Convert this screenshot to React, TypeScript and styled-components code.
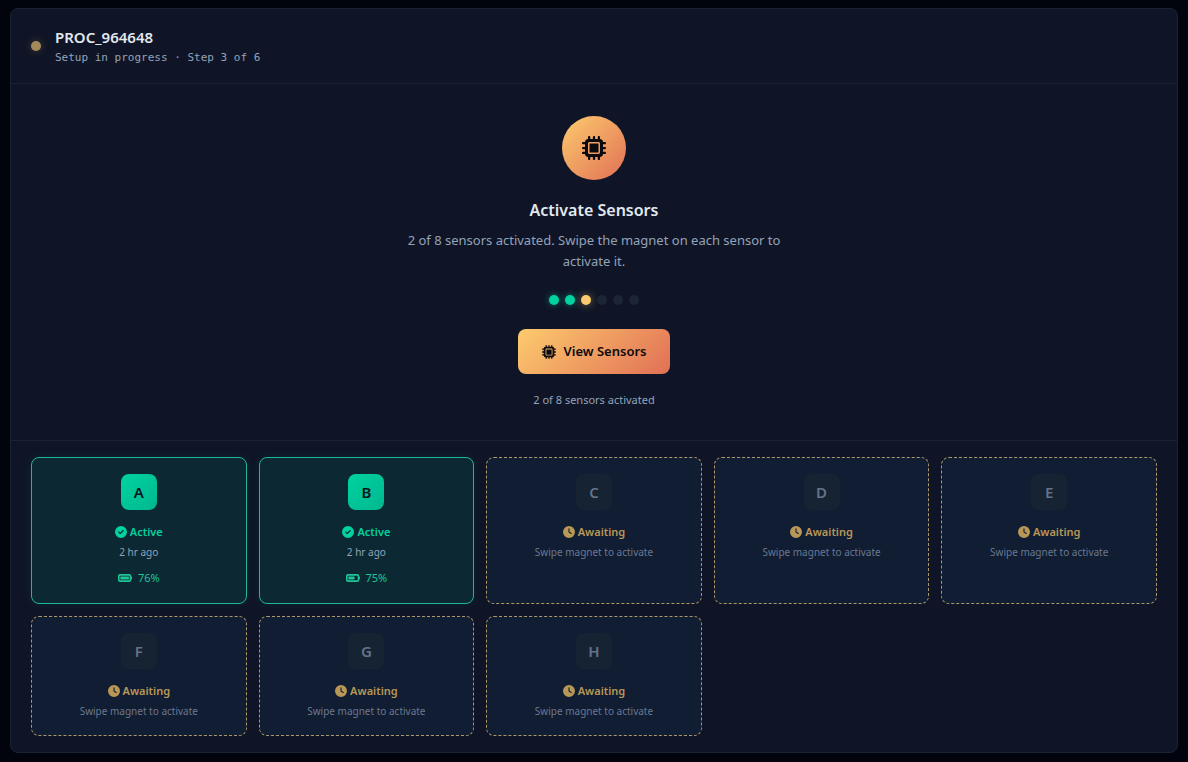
import React from 'react';
import styled, { createGlobalStyle, css } from 'styled-components';
import {
  FaMicrochip,
  FaCircleCheck,
  FaClock,
  FaBatteryFull,
  FaBatteryThreeQuarters,
} from 'react-icons/fa6';

const GlobalStyle = createGlobalStyle`
  *, *::before, *::after { box-sizing: border-box; }
  body {
    margin: 0;
    background: #01040d;
    color: #e2e8f0;
    font-family: 'Noto Sans', 'Open Sans', sans-serif;
  }
  h1, h2, p, ul, ol { margin: 0; padding: 0; }
  ul, ol { list-style: none; }
`;

const Page = styled.main`
  padding: 8px 10px;
`;

const Panel = styled.section`
  background: #0f1526;
  border: 1px solid #1a2332;
  border-radius: 8px;
`;

const Header = styled.header`
  display: flex;
  align-items: center;
  gap: 14px;
  padding: 16px 20px;
  border-bottom: 1px solid #1a2332;
`;

const StatusDot = styled.span`
  width: 10px;
  height: 10px;
  border-radius: 50%;
  background: #a48a58;
  box-shadow: 0 0 8px rgba(253, 203, 110, 0.25);
`;

const Name = styled.h1`
  font-size: 15px;
  line-height: 24px;
  font-weight: 600;
`;

const Progress = styled.p`
  font-family: 'DejaVu Sans Mono', 'Liberation Mono', monospace;
  font-size: 11px;
  line-height: 18px;
  color: #94a3b8;
`;

const Hero = styled.section`
  display: flex;
  flex-direction: column;
  align-items: center;
  padding: 32px 20px 30px;
  text-align: center;
  border-bottom: 1px solid #1a2332;
`;

const HeroIcon = styled.div`
  display: grid;
  place-items: center;
  width: 64px;
  height: 64px;
  margin-bottom: 16px;
  border-radius: 50%;
  background: linear-gradient(135deg, #fdcb6e, #e17055);
  color: #0a0a0f;
  font-size: 24px;
`;

const Title = styled.h2`
  margin-bottom: 6px;
  font-size: 16px;
  line-height: 28px;
  font-weight: 600;
`;

const Description = styled.p`
  max-width: 400px;
  margin-bottom: 23px;
  font-size: 13px;
  line-height: 21px;
  color: #94a3b8;
`;

const Steps = styled.ol`
  display: flex;
  gap: 6px;
  margin-bottom: 24px;
`;

type StepState = 'done' | 'current' | 'todo';

const stepStyles = {
  done: css`
    background: #00d2a0;
    box-shadow: 0 0 6px rgba(0, 210, 160, 0.5);
  `,
  current: css`
    background: #fdcb6e;
    box-shadow: 0 0 8px rgba(253, 203, 110, 0.5);
  `,
  todo: css`
    background: #1c2536;
  `,
};

const Step = styled.li<{ $state: StepState }>`
  width: 10px;
  height: 10px;
  border-radius: 50%;
  ${({ $state }) => stepStyles[$state]}
`;

const ViewButton = styled.button`
  display: inline-flex;
  align-items: center;
  gap: 8px;
  padding: 12px 24px;
  border: 0;
  border-radius: 8px;
  background: linear-gradient(135deg, #fdcb6e, #e17055);
  color: #0a0a0f;
  font: 600 13px/21px 'Noto Sans', 'Open Sans', sans-serif;
  cursor: pointer;

  svg { font-size: 14px; }
`;

const Note = styled.p`
  margin-top: 16px;
  font-size: 11px;
  line-height: 20px;
  color: #94a3b8;
`;

const Grid = styled.ul`
  display: grid;
  grid-template-columns: repeat(auto-fill, minmax(200px, 1fr));
  gap: 12px;
  padding: 16px 20px;
`;

const Card = styled.li<{ $active: boolean }>`
  display: flex;
  flex-direction: column;
  align-items: center;
  padding: 16px;
  border-radius: 8px;
  ${({ $active }) =>
    $active
      ? css`
          background: #0c2833;
          border: 1px solid #20b796;
          box-shadow: 0 0 12px rgba(0, 210, 160, 0.08);
        `
      : css`
          background: #111d32;
          border: 1px dashed #ad9766;
        `}
`;

const Badge = styled.span<{ $active: boolean }>`
  display: grid;
  place-items: center;
  width: 36px;
  height: 36px;
  margin-bottom: 12px;
  border-radius: 8px;
  font-size: 15px;
  line-height: 20px;
  font-weight: 600;
  ${({ $active }) =>
    $active
      ? css`
          background: linear-gradient(135deg, #00d2a0, #00b890);
          color: #06141a;
        `
      : css`
          background: #162333;
          color: #64728a;
        `}
`;

const Status = styled.span<{ $active: boolean }>`
  display: flex;
  align-items: center;
  gap: 3px;
  margin-bottom: 2px;
  font-size: 11px;
  line-height: 20px;
  font-weight: 600;
  color: ${({ $active }) => ($active ? '#00d2a0' : '#b99757')};

  svg { font-size: 12px; }
`;

const Detail = styled.span<{ $active: boolean }>`
  font-size: 10px;
  line-height: 16px;
  color: ${({ $active }) => ($active ? '#94a3b8' : '#6b7890')};
`;

const Battery = styled.span`
  display: flex;
  align-items: center;
  gap: 6px;
  margin-top: 8px;
  font-size: 11px;
  line-height: 19px;
  color: #1fc596;

  svg { font-size: 14px; }
`;

interface Sensor {
  id: string;
  seen?: string;
  battery?: number;
}

const sensors: Sensor[] = [
  { id: 'A', seen: '2 hr ago', battery: 76 },
  { id: 'B', seen: '2 hr ago', battery: 75 },
  { id: 'C' },
  { id: 'D' },
  { id: 'E' },
  { id: 'F' },
  { id: 'G' },
  { id: 'H' },
];

const steps: StepState[] = ['done', 'done', 'current', 'todo', 'todo', 'todo'];

function SensorCard({ id, seen, battery }: Sensor) {
  const active = battery !== undefined;
  return (
    <Card $active={active}>
      <Badge $active={active}>{id}</Badge>
      <Status $active={active}>
        {active ? <FaCircleCheck /> : <FaClock />}
        {active ? 'Active' : 'Awaiting'}
      </Status>
      <Detail $active={active}>{seen ?? 'Swipe magnet to activate'}</Detail>
      {active && (
        <Battery>
          {battery > 75 ? <FaBatteryFull /> : <FaBatteryThreeQuarters />}
          {battery}%
        </Battery>
      )}
    </Card>
  );
}

export default function App() {
  return (
    <Page>
      <GlobalStyle />
      <Panel>
        <Header>
          <StatusDot />
          <div>
            <Name>PROC_964648</Name>
            <Progress>Setup in progress · Step 3 of 6</Progress>
          </div>
        </Header>
        <Hero>
          <HeroIcon>
            <FaMicrochip />
          </HeroIcon>
          <Title>Activate Sensors</Title>
          <Description>
            2 of 8 sensors activated. Swipe the magnet on each sensor to activate it.
          </Description>
          <Steps>
            {steps.map((state, i) => (
              <Step key={i} $state={state} />
            ))}
          </Steps>
          <ViewButton type="button">
            <FaMicrochip />
            View Sensors
          </ViewButton>
          <Note>2 of 8 sensors activated</Note>
        </Hero>
        <Grid>
          {sensors.map((sensor) => (
            <SensorCard key={sensor.id} {...sensor} />
          ))}
        </Grid>
      </Panel>
    </Page>
  );
}
